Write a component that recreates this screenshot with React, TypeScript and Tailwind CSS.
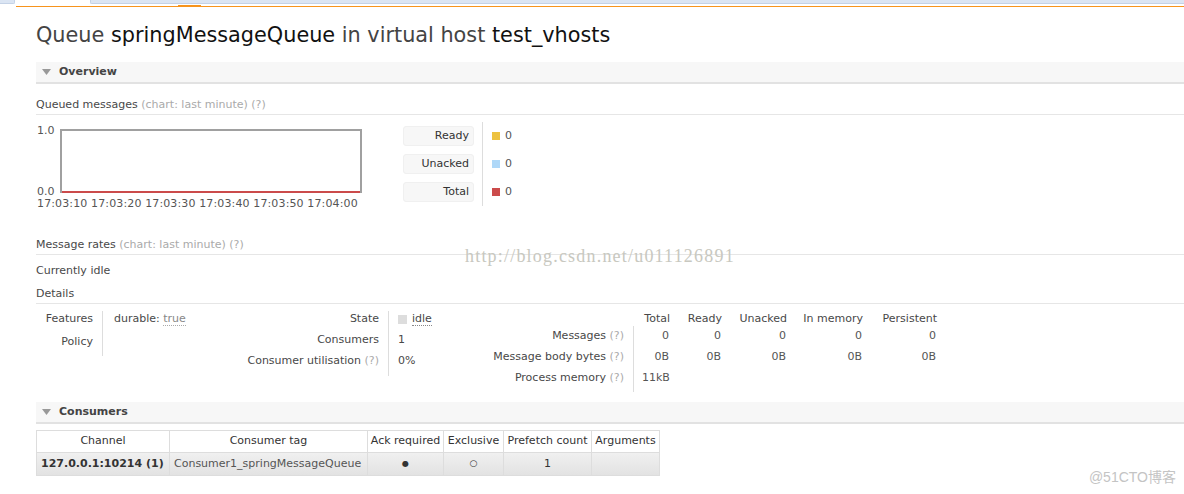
import React from "react";

const Q = () => <span className="text-[#aaa]">(?)</span>;

function SectionHeader({ title }: { title: string }) {
  return (
    <div className="flex h-[22px] items-center bg-[#f7f7f7] border-b-2 border-[#e2e2e2] pl-[6px]">
      <svg width="9" height="6" viewBox="0 0 9 6" className="mr-[8px]">
        <path d="M0 0 L9 0 L4.5 6 Z" fill="#999" />
      </svg>
      <span className="font-bold text-[11px] text-[#444]">{title}</span>
    </div>
  );
}

function SubHeader({ children }: { children: React.ReactNode }) {
  return (
    <div className="border-b border-[#e6e6e6] text-[11px] text-[#484848] pb-[2px] leading-[14px]">{children}</div>
  );
}

const cols = [
  { name: "Total", w: "w-[36px]" },
  { name: "Ready", w: "w-[52px]" },
  { name: "Unacked", w: "w-[65px]" },
  { name: "In memory", w: "w-[76px]" },
  { name: "Persistent", w: "w-[74px]" },
];

export default function App() {
  const legend = [
    { label: "Ready", color: "#edc240" },
    { label: "Unacked", color: "#afd8f8" },
    { label: "Total", color: "#cb4b4b" },
  ];
  return (
    <div
      className="w-[1184px] h-[494px] overflow-hidden bg-white text-[#484848] relative"
      style={{ fontFamily: '"DejaVu Sans", Verdana, sans-serif' }}
    >
      {/* browser tab strip */}
      <div className="flex h-[5px]">
        <div className="w-[15px] h-[4px] bg-[#dbe5f3] border-b border-r border-[#c4d2e6] rounded-br-[2px]" />
        <div className="w-[75px]" />
        <div className="flex-1 h-[4px] bg-[#dbe5f3] border-b border-l border-[#c4d2e6] rounded-bl-[2px]" />
      </div>
      <div className="flex h-[1px]">
        <div className="w-[178px]" />
        <div className="w-[23px] bg-[#f7941d]" />
      </div>
      <div className="ml-[16px] h-[1px] bg-[#f7941d]" />

      <div className="pl-[36px]">
        <h1 className="mt-[15px] text-[20.8px] leading-[26px] text-[#444] font-normal">
          Queue <span className="text-[#111]">springMessageQueue</span> in virtual host{" "}
          <span className="text-[#111]">test_vhosts</span>
        </h1>

        <div className="mt-[14px]">
          <SectionHeader title="Overview" />
        </div>

        <div className="mt-[14px]">
          <SubHeader>
            Queued messages <span className="text-[#aaa]">(chart: last minute) (?)</span>
          </SubHeader>
        </div>

        {/* chart + legend */}
        <div className="flex mt-[14px] items-start">
          <div className="w-[367px] flex flex-col text-[11px] text-[#555] leading-[12px]">
            <div className="flex">
              <div className="w-[24px] flex flex-col justify-between h-[69px] pl-[1px]">
                <span className="-mt-[4px]">1.0</span>
                <span>0.0</span>
              </div>
              <div className="w-[302px] h-[64px] border-2 border-[#a0a0a0] border-b-0 relative flex flex-col justify-end">
                <div className="h-[2px] bg-[#cb4b4b]" />
              </div>
            </div>
            <div className="text-[11px] leading-[12px] whitespace-nowrap tracking-[0.13px] pl-[1px]">
              17:03:10 17:03:20 17:03:30 17:03:40 17:03:50 17:04:00
            </div>
          </div>
          <div className="-mt-[7px] flex">
            <div className="flex flex-col gap-[8px] pt-[4px] pb-[4px] pr-[8px] border-r border-[#ddd]">
              {legend.map((l) => (
                <div
                  key={l.label}
                  className="w-[71px] h-[20px] bg-[#f7f7f7] rounded-[3px] border border-[#f0f0f0] text-right text-[11px] leading-[18px] pr-[4px] text-[#333]"
                >
                  {l.label}
                </div>
              ))}
            </div>
            <div className="flex flex-col gap-[8px] pt-[4px] pl-[9px]">
              {legend.map((l) => (
                <div key={l.label} className="h-[20px] flex items-center text-[11px] text-[#555]">
                  <span className="w-[8px] h-[8px] mr-[5px]" style={{ background: l.color }} />
                  0
                </div>
              ))}
            </div>
          </div>
        </div>

        <div className="mt-[28px]">
          <SubHeader>
            Message rates <span className="text-[#aaa]">(chart: last minute) (?)</span>
          </SubHeader>
        </div>
        <div className="mt-[9px] text-[11px] leading-[14px]">Currently idle</div>
        <div className="mt-[9px]">
          <SubHeader>Details</SubHeader>
        </div>

        {/* details */}
        <div className="flex mt-[8px] text-[11px] leading-[14px]">
          <div className="flex w-[150px] items-start">
            <div className="w-[67px] pr-[9px] text-right border-r border-[#ddd] flex flex-col gap-[9px] h-[45px] -mt-[1px] pt-[1px]">
              <span>Features</span>
              <span>Policy</span>
            </div>
            <div className="pl-[11px] whitespace-nowrap">
              durable: <span className="text-[#888] border-b border-dotted border-[#aaa]">true</span>
            </div>
          </div>
          <div className="flex items-start">
            <div className="w-[203px] pr-[9px] text-right flex flex-col gap-[7px] border-r border-[#ddd] h-[65px] -mt-[1px] pt-[1px]">
              <span>State</span>
              <span>Consumers</span>
              <span>
                Consumer utilisation <Q />
              </span>
            </div>
            <div className="w-[60px] pl-[9px] flex flex-col gap-[7px]">
              <span className="flex items-center">
                <span className="w-[9px] h-[9px] bg-[#ddd] mr-[5px]" />
                <span className="border-b border-dotted border-[#888] leading-[13px]">idle</span>
              </span>
              <span>1</span>
              <span>0%</span>
            </div>
          </div>
          <div className="flex flex-col">
            <div className="flex">
              <div className="w-[185px]" />
              {cols.map((c) => (
                <div key={c.name} className={`${c.w} text-right`}>
                  {c.name}
                </div>
              ))}
            </div>
            <div className="flex">
              <div className="w-[185px] text-right pr-[9px] flex flex-col gap-[7px] border-r border-[#ddd] h-[66px] pt-[3px]">
                <span className="whitespace-nowrap">
                  Messages <Q />
                </span>
                <span className="whitespace-nowrap">
                  Message body bytes <Q />
                </span>
                <span className="whitespace-nowrap">
                  Process memory <Q />
                </span>
              </div>
              <div className="flex flex-col gap-[7px] pt-[3px] text-[#555] -ml-[1px]">
                <div className="flex">
                  {cols.map((c) => (
                    <div key={c.name} className={`${c.w} text-right`}>
                      0
                    </div>
                  ))}
                </div>
                <div className="flex">
                  {cols.map((c) => (
                    <div key={c.name} className={`${c.w} text-right`}>
                      0B
                    </div>
                  ))}
                </div>
                <div className="flex">
                  <div className="pl-[9px]">11kB</div>
                </div>
              </div>
            </div>
          </div>
        </div>

        <div className="mt-[10px]">
          <SectionHeader title="Consumers" />
        </div>

        <table className="mt-[6px] border-collapse text-[11px] text-[#333]">
          <thead>
            <tr className="h-[22px]">
              <th className="font-normal border border-[#ddd] w-[133px] px-[4px]">Channel</th>
              <th className="font-normal border border-[#ddd] w-[198px] px-[4px]">Consumer tag</th>
              <th className="font-normal border border-[#ddd] w-[76px] px-[2px] whitespace-nowrap">Ack required</th>
              <th className="font-normal border border-[#ddd] w-[60px] px-[2px]">Exclusive</th>
              <th className="font-normal border border-[#ddd] w-[88px] px-[2px] whitespace-nowrap">Prefetch count</th>
              <th className="font-normal border border-[#ddd] w-[68px] px-[2px]">Arguments</th>
            </tr>
          </thead>
          <tbody>
            <tr className="h-[23px] bg-gradient-to-b from-[#f0f0f0] to-[#e2e2e2]">
              <td className="border border-[#ddd] px-[4px] font-bold whitespace-nowrap">127.0.0.1:10214 (1)</td>
              <td className="border border-[#ddd] px-[4px] text-[#555] whitespace-nowrap">Consumer1_springMessageQueue</td>
              <td className="border border-[#ddd] text-center text-[8px]">●</td>
              <td className="border border-[#ddd] text-center text-[9px]">○</td>
              <td className="border border-[#ddd] text-center">1</td>
              <td className="border border-[#ddd]"></td>
            </tr>
          </tbody>
        </table>
      </div>

      {/* watermarks */}
      <div
        className="absolute left-[465px] top-[245px] text-[18px] leading-[22px] tracking-[1.2px] text-[#c8c8c0] whitespace-nowrap"
        style={{ fontFamily: '"Liberation Serif", serif' }}
      >
        http://blog.csdn.net/u011126891
      </div>
      <div
        className="absolute right-[8px] bottom-[6px] text-[14px] text-[#c4c4c4]"
        style={{ fontFamily: '"Liberation Sans", "Noto Sans CJK SC", sans-serif' }}
      >
        @51CTO博客
      </div>
    </div>
  );
}
